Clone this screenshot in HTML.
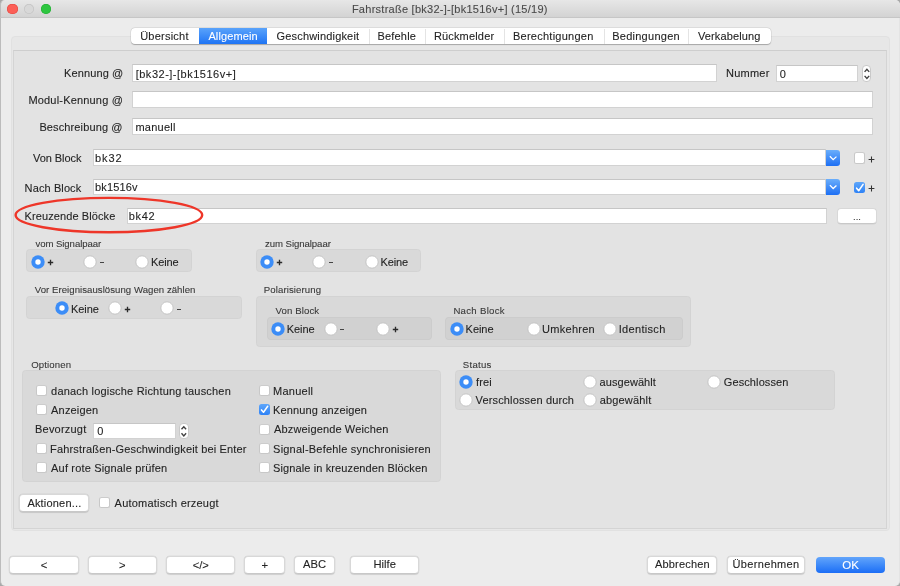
<!DOCTYPE html>
<html><head><meta charset="utf-8"><style>
html,body{margin:0;padding:0;}
body{width:900px;height:586px;position:relative;overflow:hidden;background:#a8a8a8;font-family:"Liberation Sans", sans-serif;}
.t{position:absolute;white-space:nowrap;-webkit-text-stroke:0.1px currentColor;}
</style></head><body><div style="position:absolute;left:0;top:0;width:900px;height:586px;will-change:transform;">
<div style="position:absolute;left:0px;top:0px;width:900.00px;height:586.00px;box-sizing:border-box;background:#ececec;border-left:1px solid #bcbcbc;border-right:1px solid #e4e4e4;border-radius:5px;"></div>
<div style="position:absolute;left:0px;top:0px;width:900.00px;height:18.00px;box-sizing:border-box;background:linear-gradient(#e7e7e7,#d3d3d3);border-bottom:1px solid #c6c6c6;border-left:1px solid #bcbcbc;border-radius:5px 5px 0 0;"></div>
<div style="position:absolute;left:7.2px;top:3.7px;width:10.6px;height:10.6px;border-radius:50%;background:#fc5f57;box-shadow:inset 0 0 0 0.5px #e0443e"></div>
<div style="position:absolute;left:23.9px;top:3.7px;width:10.6px;height:10.6px;border-radius:50%;background:#d8d8d8;box-shadow:inset 0 0 0 0.7px #c4c4c4"></div>
<div style="position:absolute;left:40.6px;top:3.7px;width:10.6px;height:10.6px;border-radius:50%;background:#2ec640;box-shadow:inset 0 0 0 0.5px #1eab2f"></div>
<div class="t" style="left:351.90px;top:4px;font-size:11px;line-height:11px;letter-spacing:0.261px;color:#4a4a4a;">Fahrstraße [bk32-]-[bk1516v+] (15/19)</div>
<div style="position:absolute;left:11px;top:36px;width:879.00px;height:495.00px;box-sizing:border-box;background:#e7e7e7;border:1px solid #e1e1e1;border-radius:4px;"></div>
<div style="position:absolute;left:13px;top:50px;width:874.00px;height:479.00px;box-sizing:border-box;background:#e3e3e3;border:1px solid #d4d4d4;border-top-color:#cecece;"></div>
<div style="position:absolute;left:131px;top:28px;width:640.00px;height:16.00px;box-sizing:border-box;background:#fff;border-radius:4px;box-shadow:0 0.5px 1px rgba(0,0,0,0.25),0 0 0 0.5px rgba(0,0,0,0.08);"></div>
<div style="position:absolute;left:199px;top:28px;width:68.00px;height:16.00px;box-sizing:border-box;background:linear-gradient(#5aa3fb,#1f74f4);"></div>
<div style="position:absolute;left:369px;top:29px;width:1.00px;height:15.00px;box-sizing:border-box;background:#e4e4e4;"></div>
<div style="position:absolute;left:425px;top:29px;width:1.00px;height:15.00px;box-sizing:border-box;background:#e4e4e4;"></div>
<div style="position:absolute;left:504px;top:29px;width:1.00px;height:15.00px;box-sizing:border-box;background:#e4e4e4;"></div>
<div style="position:absolute;left:604px;top:29px;width:1.00px;height:15.00px;box-sizing:border-box;background:#e4e4e4;"></div>
<div style="position:absolute;left:688px;top:29px;width:1.00px;height:15.00px;box-sizing:border-box;background:#e4e4e4;"></div>
<div class="t" style="left:140.20px;top:31px;font-size:11px;line-height:11px;letter-spacing:0.225px;color:#242424;">Übersicht</div>
<div class="t" style="left:208.40px;top:31px;font-size:11px;line-height:11px;letter-spacing:0.125px;color:#fff;">Allgemein</div>
<div class="t" style="left:276.60px;top:31px;font-size:11px;line-height:11px;letter-spacing:0.171px;color:#242424;">Geschwindigkeit</div>
<div class="t" style="left:377.40px;top:31px;font-size:11px;line-height:11px;letter-spacing:0.200px;color:#242424;">Befehle</div>
<div class="t" style="left:433.90px;top:31px;font-size:11px;line-height:11px;letter-spacing:0.167px;color:#242424;">Rückmelder</div>
<div class="t" style="left:513.00px;top:31px;font-size:11px;line-height:11px;letter-spacing:0.246px;color:#242424;">Berechtigungen</div>
<div class="t" style="left:612.20px;top:31px;font-size:11px;line-height:11px;letter-spacing:0.260px;color:#242424;">Bedingungen</div>
<div class="t" style="left:698.00px;top:31px;font-size:11px;line-height:11px;letter-spacing:0.110px;color:#242424;">Verkabelung</div>
<div class="t" style="left:64.00px;top:68px;font-size:11px;line-height:11px;letter-spacing:0.125px;color:#242424;">Kennung @</div>
<div style="position:absolute;left:132.4px;top:64.4px;width:584.60px;height:17.60px;box-sizing:border-box;background:#fff;border:1px solid #d2d2d2;border-top-color:#c6c6c6;"></div>
<div class="t" style="left:135.70px;top:69px;font-size:11px;line-height:11px;letter-spacing:0.506px;color:#242424;">[bk32-]-[bk1516v+]</div>
<div class="t" style="left:726.00px;top:68px;font-size:11px;line-height:11px;letter-spacing:0.240px;color:#242424;">Nummer</div>
<div style="position:absolute;left:776.4px;top:64.6px;width:81.90px;height:17.40px;box-sizing:border-box;background:#fff;border:1px solid #d2d2d2;border-top-color:#c6c6c6;"></div>
<div class="t" style="left:779.80px;top:69px;font-size:11px;line-height:11px;letter-spacing:-0.200px;color:#242424;">0</div>
<div style="position:absolute;left:861.7px;top:64.6px;width:9.80px;height:17.80px;box-sizing:border-box;background:#fff;border:1px solid #c9c9c9;border-radius:4px;"></div>
<svg style="position:absolute;left:861.7px;top:64.6px" width="9.80" height="17.80"><path d="M2.60 6.90 L4.90 4.30 L7.20 6.90 M2.60 10.90 L4.90 13.50 L7.20 10.90" fill="none" stroke="#404040" stroke-width="1.35"/></svg>
<div class="t" style="left:28.40px;top:95px;font-size:11px;line-height:11px;letter-spacing:0.186px;color:#242424;">Modul-Kennung @</div>
<div style="position:absolute;left:132.4px;top:91.4px;width:740.30px;height:16.90px;box-sizing:border-box;background:#fff;border:1px solid #d2d2d2;border-top-color:#c6c6c6;"></div>
<div class="t" style="left:39.40px;top:122px;font-size:11px;line-height:11px;letter-spacing:0.123px;color:#242424;">Beschreibung @</div>
<div style="position:absolute;left:132.4px;top:117.8px;width:740.30px;height:17.50px;box-sizing:border-box;background:#fff;border:1px solid #d2d2d2;border-top-color:#c6c6c6;"></div>
<div class="t" style="left:135.40px;top:122px;font-size:11px;line-height:11px;letter-spacing:0.267px;color:#242424;">manuell</div>
<div class="t" style="left:33.00px;top:153px;font-size:11px;line-height:11px;letter-spacing:-0.050px;color:#242424;">Von Block</div>
<div style="position:absolute;left:92.6px;top:149.3px;width:733.40px;height:17.00px;box-sizing:border-box;background:#fff;border:1px solid #d2d2d2;border-top-color:#c6c6c6;"></div>
<div class="t" style="left:95.10px;top:153px;font-size:11px;line-height:11px;letter-spacing:0.900px;color:#242424;">bk32</div>
<div style="position:absolute;left:826px;top:149.5px;width:14.30px;height:16.80px;box-sizing:border-box;background:linear-gradient(#6aaefb,#1d6ff4);border-radius:0 3px 3px 0;"></div>
<svg style="position:absolute;left:826px;top:149.5px" width="14.30" height="16.80"><path d="M3.85 6.30 L7.15 9.70 L10.45 6.60" fill="none" stroke="#fff" stroke-width="1.3"/></svg>
<div style="position:absolute;left:853.5px;top:152.3px;width:11.50px;height:11.50px;box-sizing:border-box;background:#fff;border:1px solid #c8c8c8;border-top-color:#cccccc;border-radius:2.5px;"></div>
<svg style="position:absolute;left:867px;top:155px" width="9" height="9"><path d="M1.60 4.5 H7.40 M4.5 1.60 V7.40" stroke="#333" stroke-width="1.05" fill="none"/></svg>
<div class="t" style="left:24.60px;top:183px;font-size:11px;line-height:11px;letter-spacing:0.111px;color:#242424;">Nach Block</div>
<div style="position:absolute;left:92.6px;top:178.5px;width:733.40px;height:16.70px;box-sizing:border-box;background:#fff;border:1px solid #d2d2d2;border-top-color:#c6c6c6;"></div>
<div class="t" style="left:95.10px;top:182px;font-size:11px;line-height:11px;letter-spacing:0.133px;color:#242424;">bk1516v</div>
<div style="position:absolute;left:826px;top:178.8px;width:14.30px;height:16.50px;box-sizing:border-box;background:linear-gradient(#6aaefb,#1d6ff4);border-radius:0 3px 3px 0;"></div>
<svg style="position:absolute;left:826px;top:178.8px" width="14.30" height="16.50"><path d="M3.85 6.15 L7.15 9.55 L10.45 6.45" fill="none" stroke="#fff" stroke-width="1.3"/></svg>
<div style="position:absolute;left:853.5px;top:181.8px;width:11.50px;height:11.50px;box-sizing:border-box;background:linear-gradient(#5ea6fa,#2e82f6);border-radius:2.5px;"></div>
<svg style="position:absolute;left:853.5px;top:181.8px" width="11.5" height="11.5" viewBox="0 0 11 11"><path d="M2.5 5.9 L4.5 8.3 L8.7 2.3" fill="none" stroke="#fff" stroke-width="1.5" stroke-linecap="round" stroke-linejoin="round"/></svg>
<svg style="position:absolute;left:867px;top:184px" width="9" height="9"><path d="M1.60 4.5 H7.40 M4.5 1.60 V7.40" stroke="#333" stroke-width="1.05" fill="none"/></svg>
<div class="t" style="left:24.60px;top:211px;font-size:11px;line-height:11px;letter-spacing:0.093px;color:#242424;">Kreuzende Blöcke</div>
<div style="position:absolute;left:126.5px;top:207.6px;width:700.80px;height:16.70px;box-sizing:border-box;background:#fff;border:1px solid #d2d2d2;border-top-color:#c6c6c6;"></div>
<div class="t" style="left:128.70px;top:211px;font-size:11px;line-height:11px;letter-spacing:0.667px;color:#242424;">bk42</div>
<div style="position:absolute;left:837px;top:207.6px;width:40.00px;height:16.00px;box-sizing:border-box;background:#fff;border:1px solid #d8d8d8;border-bottom-color:#c8c8c8;border-radius:4px;box-shadow:0 0.5px 0.5px rgba(0,0,0,0.08);"></div>
<div class="t" style="left:657.00px;width:400px;text-align:center;top:212px;font-size:9.5px;line-height:9.5px;color:#333;">...</div>
<svg style="position:absolute;left:0;top:0" width="900" height="586"><ellipse cx="108.9" cy="215.1" rx="93.3" ry="17.2" fill="none" stroke="#ee3629" stroke-width="2.4"/></svg>
<div class="t" style="left:35.40px;top:239px;font-size:9.6px;line-height:9.6px;letter-spacing:-0.062px;color:#383838;">vom Signalpaar</div>
<div style="position:absolute;left:26px;top:248.8px;width:165.60px;height:23.20px;box-sizing:border-box;background:#d9d9d9;border-radius:4px;box-shadow:inset 0 0 0 1px rgba(0,0,0,0.025);"></div>
<svg style="position:absolute;left:29.50px;top:253.80px" width="16" height="16"><circle cx="8" cy="8" r="6.70" fill="#3c8df7"/><circle cx="8" cy="8" r="2.7" fill="#fff"/></svg>
<svg style="position:absolute;left:46px;top:258px" width="9" height="9"><path d="M1.80 4.5 H7.20 M4.5 1.80 V7.20" stroke="#2a2a2a" stroke-width="1.35" fill="none"/></svg>
<svg style="position:absolute;left:81.80px;top:253.80px" width="16" height="16"><circle cx="8" cy="8" r="6.20" fill="#fff" stroke="#c4c4c4" stroke-width="1"/></svg>
<div style="position:absolute;left:100px;top:262px;width:3.8px;height:1.2px;background:#444;"></div>
<svg style="position:absolute;left:134.00px;top:253.80px" width="16" height="16"><circle cx="8" cy="8" r="6.20" fill="#fff" stroke="#c4c4c4" stroke-width="1"/></svg>
<div class="t" style="left:151.00px;top:257px;font-size:11px;line-height:11px;letter-spacing:-0.125px;color:#242424;">Keine</div>
<div class="t" style="left:265.00px;top:239px;font-size:9.6px;line-height:9.6px;letter-spacing:-0.062px;color:#383838;">zum Signalpaar</div>
<div style="position:absolute;left:255.6px;top:248.8px;width:165.60px;height:23.20px;box-sizing:border-box;background:#d9d9d9;border-radius:4px;box-shadow:inset 0 0 0 1px rgba(0,0,0,0.025);"></div>
<svg style="position:absolute;left:259.10px;top:253.80px" width="16" height="16"><circle cx="8" cy="8" r="6.70" fill="#3c8df7"/><circle cx="8" cy="8" r="2.7" fill="#fff"/></svg>
<svg style="position:absolute;left:275px;top:258px" width="9" height="9"><path d="M1.80 4.5 H7.20 M4.5 1.80 V7.20" stroke="#2a2a2a" stroke-width="1.35" fill="none"/></svg>
<svg style="position:absolute;left:311.40px;top:253.80px" width="16" height="16"><circle cx="8" cy="8" r="6.20" fill="#fff" stroke="#c4c4c4" stroke-width="1"/></svg>
<div style="position:absolute;left:329px;top:262px;width:3.8px;height:1.2px;background:#444;"></div>
<svg style="position:absolute;left:363.60px;top:253.80px" width="16" height="16"><circle cx="8" cy="8" r="6.20" fill="#fff" stroke="#c4c4c4" stroke-width="1"/></svg>
<div class="t" style="left:380.60px;top:257px;font-size:11px;line-height:11px;letter-spacing:-0.125px;color:#242424;">Keine</div>
<div class="t" style="left:34.80px;top:285px;font-size:9.6px;line-height:9.6px;letter-spacing:0.045px;color:#383838;">Vor Ereignisauslösung Wagen zählen</div>
<div style="position:absolute;left:25.6px;top:295.9px;width:216.70px;height:22.70px;box-sizing:border-box;background:#d9d9d9;border-radius:4px;box-shadow:inset 0 0 0 1px rgba(0,0,0,0.025);"></div>
<svg style="position:absolute;left:54.40px;top:300.40px" width="16" height="16"><circle cx="8" cy="8" r="6.70" fill="#3c8df7"/><circle cx="8" cy="8" r="2.7" fill="#fff"/></svg>
<div class="t" style="left:70.90px;top:304px;font-size:11px;line-height:11px;letter-spacing:-0.050px;color:#242424;">Keine</div>
<svg style="position:absolute;left:106.90px;top:300.40px" width="16" height="16"><circle cx="8" cy="8" r="6.20" fill="#fff" stroke="#c4c4c4" stroke-width="1"/></svg>
<svg style="position:absolute;left:123px;top:305px" width="9" height="9"><path d="M1.80 4.5 H7.20 M4.5 1.80 V7.20" stroke="#2a2a2a" stroke-width="1.35" fill="none"/></svg>
<svg style="position:absolute;left:159.30px;top:300.40px" width="16" height="16"><circle cx="8" cy="8" r="6.20" fill="#fff" stroke="#c4c4c4" stroke-width="1"/></svg>
<div style="position:absolute;left:177px;top:309px;width:3.8px;height:1.2px;background:#444;"></div>
<div class="t" style="left:263.80px;top:285px;font-size:9.6px;line-height:9.6px;letter-spacing:0.100px;color:#383838;">Polarisierung</div>
<div style="position:absolute;left:255.6px;top:295.9px;width:435.20px;height:50.90px;box-sizing:border-box;background:#d9d9d9;border-radius:4px;box-shadow:inset 0 0 0 1px rgba(0,0,0,0.025);"></div>
<div class="t" style="left:275.60px;top:306px;font-size:9.6px;line-height:9.6px;letter-spacing:0.112px;color:#383838;">Von Block</div>
<div style="position:absolute;left:266.9px;top:317.2px;width:165.10px;height:22.40px;box-sizing:border-box;background:#d1d1d1;border-radius:4px;box-shadow:inset 0 0 0 1px rgba(0,0,0,0.025);"></div>
<svg style="position:absolute;left:270.00px;top:321.00px" width="16" height="16"><circle cx="8" cy="8" r="6.70" fill="#3c8df7"/><circle cx="8" cy="8" r="2.7" fill="#fff"/></svg>
<div class="t" style="left:286.80px;top:324px;font-size:11px;line-height:11px;letter-spacing:-0.100px;color:#242424;">Keine</div>
<svg style="position:absolute;left:322.50px;top:321.00px" width="16" height="16"><circle cx="8" cy="8" r="6.20" fill="#fff" stroke="#c4c4c4" stroke-width="1"/></svg>
<div style="position:absolute;left:340px;top:329px;width:3.8px;height:1.2px;background:#444;"></div>
<svg style="position:absolute;left:374.90px;top:321.00px" width="16" height="16"><circle cx="8" cy="8" r="6.20" fill="#fff" stroke="#c4c4c4" stroke-width="1"/></svg>
<svg style="position:absolute;left:391px;top:325px" width="9" height="9"><path d="M1.80 4.5 H7.20 M4.5 1.80 V7.20" stroke="#2a2a2a" stroke-width="1.35" fill="none"/></svg>
<div class="t" style="left:453.40px;top:306px;font-size:9.6px;line-height:9.6px;letter-spacing:0.300px;color:#383838;">Nach Block</div>
<div style="position:absolute;left:445.2px;top:317.2px;width:238.30px;height:22.40px;box-sizing:border-box;background:#d1d1d1;border-radius:4px;box-shadow:inset 0 0 0 1px rgba(0,0,0,0.025);"></div>
<svg style="position:absolute;left:449.20px;top:321.00px" width="16" height="16"><circle cx="8" cy="8" r="6.70" fill="#3c8df7"/><circle cx="8" cy="8" r="2.7" fill="#fff"/></svg>
<div class="t" style="left:465.60px;top:324px;font-size:11px;line-height:11px;letter-spacing:-0.050px;color:#242424;">Keine</div>
<svg style="position:absolute;left:525.70px;top:321.00px" width="16" height="16"><circle cx="8" cy="8" r="6.20" fill="#fff" stroke="#c4c4c4" stroke-width="1"/></svg>
<div class="t" style="left:542.10px;top:324px;font-size:11px;line-height:11px;letter-spacing:0.271px;color:#242424;">Umkehren</div>
<svg style="position:absolute;left:602.30px;top:321.00px" width="16" height="16"><circle cx="8" cy="8" r="6.20" fill="#fff" stroke="#c4c4c4" stroke-width="1"/></svg>
<div class="t" style="left:618.70px;top:324px;font-size:11px;line-height:11px;letter-spacing:0.325px;color:#242424;">Identisch</div>
<div class="t" style="left:31.20px;top:360px;font-size:9.6px;line-height:9.6px;letter-spacing:0.129px;color:#383838;">Optionen</div>
<div style="position:absolute;left:21.9px;top:370px;width:418.90px;height:112.00px;box-sizing:border-box;background:#d9d9d9;border-radius:4px;box-shadow:inset 0 0 0 1px rgba(0,0,0,0.025);"></div>
<div style="position:absolute;left:36.1px;top:385.2px;width:11.00px;height:11.00px;box-sizing:border-box;background:#fff;border:1px solid #c8c8c8;border-top-color:#cccccc;border-radius:2.5px;"></div>
<div class="t" style="left:51.10px;top:386px;font-size:11px;line-height:11px;letter-spacing:0.188px;color:#242424;">danach logische Richtung tauschen</div>
<div style="position:absolute;left:36.1px;top:404.4px;width:11.00px;height:11.00px;box-sizing:border-box;background:#fff;border:1px solid #c8c8c8;border-top-color:#cccccc;border-radius:2.5px;"></div>
<div class="t" style="left:51.10px;top:405px;font-size:11px;line-height:11px;letter-spacing:0.171px;color:#242424;">Anzeigen</div>
<div style="position:absolute;left:36.1px;top:443.3px;width:11.00px;height:11.00px;box-sizing:border-box;background:#fff;border:1px solid #c8c8c8;border-top-color:#cccccc;border-radius:2.5px;"></div>
<div class="t" style="left:50.10px;top:444px;font-size:11px;line-height:11px;letter-spacing:0.156px;color:#242424;">Fahrstraßen-Geschwindigkeit bei Enter</div>
<div style="position:absolute;left:36.1px;top:462.2px;width:11.00px;height:11.00px;box-sizing:border-box;background:#fff;border:1px solid #c8c8c8;border-top-color:#cccccc;border-radius:2.5px;"></div>
<div class="t" style="left:51.10px;top:463px;font-size:11px;line-height:11px;letter-spacing:0.164px;color:#242424;">Auf rote Signale prüfen</div>
<div style="position:absolute;left:259.2px;top:385.2px;width:11.00px;height:11.00px;box-sizing:border-box;background:#fff;border:1px solid #c8c8c8;border-top-color:#cccccc;border-radius:2.5px;"></div>
<div class="t" style="left:273.10px;top:386px;font-size:11px;line-height:11px;letter-spacing:0.233px;color:#242424;">Manuell</div>
<div style="position:absolute;left:259.2px;top:404.4px;width:11.00px;height:11.00px;box-sizing:border-box;background:linear-gradient(#5ea6fa,#2e82f6);border-radius:2.5px;"></div>
<svg style="position:absolute;left:259.2px;top:404.4px" width="11" height="11" viewBox="0 0 11 11"><path d="M2.5 5.9 L4.5 8.3 L8.7 2.3" fill="none" stroke="#fff" stroke-width="1.5" stroke-linecap="round" stroke-linejoin="round"/></svg>
<div class="t" style="left:273.10px;top:405px;font-size:11px;line-height:11px;letter-spacing:0.133px;color:#242424;">Kennung anzeigen</div>
<div style="position:absolute;left:259.2px;top:423.6px;width:11.00px;height:11.00px;box-sizing:border-box;background:#fff;border:1px solid #c8c8c8;border-top-color:#cccccc;border-radius:2.5px;"></div>
<div class="t" style="left:274.10px;top:424px;font-size:11px;line-height:11px;letter-spacing:0.139px;color:#242424;">Abzweigende Weichen</div>
<div style="position:absolute;left:259.2px;top:443.3px;width:11.00px;height:11.00px;box-sizing:border-box;background:#fff;border:1px solid #c8c8c8;border-top-color:#cccccc;border-radius:2.5px;"></div>
<div class="t" style="left:273.10px;top:444px;font-size:11px;line-height:11px;letter-spacing:0.207px;color:#242424;">Signal-Befehle synchronisieren</div>
<div style="position:absolute;left:259.2px;top:462.2px;width:11.00px;height:11.00px;box-sizing:border-box;background:#fff;border:1px solid #c8c8c8;border-top-color:#cccccc;border-radius:2.5px;"></div>
<div class="t" style="left:273.10px;top:463px;font-size:11px;line-height:11px;letter-spacing:0.111px;color:#242424;">Signale in kreuzenden Blöcken</div>
<div class="t" style="left:35.00px;top:424px;font-size:11px;line-height:11px;letter-spacing:0.213px;color:#242424;">Bevorzugt</div>
<div style="position:absolute;left:93.3px;top:422.6px;width:82.70px;height:16.60px;box-sizing:border-box;background:#fff;border:1px solid #d2d2d2;border-top-color:#c6c6c6;"></div>
<div class="t" style="left:97.30px;top:426px;font-size:11px;line-height:11px;color:#242424;">0</div>
<div style="position:absolute;left:179.2px;top:422.6px;width:9.60px;height:16.60px;box-sizing:border-box;background:#fff;border:1px solid #c9c9c9;border-radius:4px;"></div>
<svg style="position:absolute;left:179.2px;top:422.6px" width="9.60" height="16.60"><path d="M2.50 6.30 L4.80 3.70 L7.10 6.30 M2.50 10.30 L4.80 12.90 L7.10 10.30" fill="none" stroke="#404040" stroke-width="1.35"/></svg>
<div class="t" style="left:462.80px;top:360px;font-size:9.6px;line-height:9.6px;letter-spacing:0.260px;color:#383838;">Status</div>
<div style="position:absolute;left:455px;top:370.3px;width:379.90px;height:40.00px;box-sizing:border-box;background:#d9d9d9;border-radius:4px;box-shadow:inset 0 0 0 1px rgba(0,0,0,0.025);"></div>
<svg style="position:absolute;left:458.20px;top:374.40px" width="16" height="16"><circle cx="8" cy="8" r="6.70" fill="#3c8df7"/><circle cx="8" cy="8" r="2.7" fill="#fff"/></svg>
<div class="t" style="left:475.90px;top:377px;font-size:11px;line-height:11px;letter-spacing:0.200px;color:#242424;">frei</div>
<svg style="position:absolute;left:582.20px;top:374.40px" width="16" height="16"><circle cx="8" cy="8" r="6.20" fill="#fff" stroke="#c4c4c4" stroke-width="1"/></svg>
<div class="t" style="left:599.60px;top:377px;font-size:11px;line-height:11px;letter-spacing:0.067px;color:#242424;">ausgewählt</div>
<svg style="position:absolute;left:706.10px;top:374.40px" width="16" height="16"><circle cx="8" cy="8" r="6.20" fill="#fff" stroke="#c4c4c4" stroke-width="1"/></svg>
<div class="t" style="left:723.80px;top:377px;font-size:11px;line-height:11px;letter-spacing:0.100px;color:#242424;">Geschlossen</div>
<svg style="position:absolute;left:458.20px;top:391.90px" width="16" height="16"><circle cx="8" cy="8" r="6.20" fill="#fff" stroke="#c4c4c4" stroke-width="1"/></svg>
<div class="t" style="left:475.60px;top:395px;font-size:11px;line-height:11px;letter-spacing:0.141px;color:#242424;">Verschlossen durch</div>
<svg style="position:absolute;left:582.20px;top:391.90px" width="16" height="16"><circle cx="8" cy="8" r="6.20" fill="#fff" stroke="#c4c4c4" stroke-width="1"/></svg>
<div class="t" style="left:599.70px;top:395px;font-size:11px;line-height:11px;letter-spacing:0.175px;color:#242424;">abgewählt</div>
<div style="position:absolute;left:19.3px;top:494.3px;width:69.40px;height:17.30px;box-sizing:border-box;background:#fff;border:1px solid #d8d8d8;border-bottom-color:#c8c8c8;border-radius:4px;box-shadow:0 0 0 0.5px rgba(0,0,0,0.06),0 0.5px 1px rgba(0,0,0,0.1);"></div>
<div class="t" style="left:27.40px;top:498px;font-size:11px;line-height:11px;letter-spacing:0.190px;color:#242424;">Aktionen...</div>
<div style="position:absolute;left:99.4px;top:497.2px;width:11.00px;height:11.00px;box-sizing:border-box;background:#fff;border:1px solid #c8c8c8;border-top-color:#cccccc;border-radius:2.5px;"></div>
<div class="t" style="left:114.60px;top:498px;font-size:11px;line-height:11px;letter-spacing:0.206px;color:#242424;">Automatisch erzeugt</div>
<div style="position:absolute;left:9.4px;top:556.3px;width:69.20px;height:17.30px;box-sizing:border-box;background:#fff;border:1px solid #d8d8d8;border-bottom-color:#c8c8c8;border-radius:4px;box-shadow:0 0 0 0.5px rgba(0,0,0,0.06),0 0.5px 1px rgba(0,0,0,0.1);"></div>
<div class="t" style="left:-156.00px;width:400px;text-align:center;top:560px;font-size:11.2px;line-height:11.2px;color:#242424;">&lt;</div>
<div style="position:absolute;left:87.6px;top:556.3px;width:69.30px;height:17.30px;box-sizing:border-box;background:#fff;border:1px solid #d8d8d8;border-bottom-color:#c8c8c8;border-radius:4px;box-shadow:0 0 0 0.5px rgba(0,0,0,0.06),0 0.5px 1px rgba(0,0,0,0.1);"></div>
<div class="t" style="left:-77.75px;width:400px;text-align:center;top:560px;font-size:11.2px;line-height:11.2px;color:#242424;">&gt;</div>
<div style="position:absolute;left:166.2px;top:556.3px;width:69.20px;height:17.30px;box-sizing:border-box;background:#fff;border:1px solid #d8d8d8;border-bottom-color:#c8c8c8;border-radius:4px;box-shadow:0 0 0 0.5px rgba(0,0,0,0.06),0 0.5px 1px rgba(0,0,0,0.1);"></div>
<div class="t" style="left:0.80px;width:400px;text-align:center;top:560px;font-size:11.2px;line-height:11.2px;color:#242424;">&lt;/&gt;</div>
<div style="position:absolute;left:244.2px;top:556.3px;width:41.00px;height:17.30px;box-sizing:border-box;background:#fff;border:1px solid #d8d8d8;border-bottom-color:#c8c8c8;border-radius:4px;box-shadow:0 0 0 0.5px rgba(0,0,0,0.06),0 0.5px 1px rgba(0,0,0,0.1);"></div>
<div class="t" style="left:64.70px;width:400px;text-align:center;top:560px;font-size:11.2px;line-height:11.2px;color:#242424;">+</div>
<div style="position:absolute;left:294.0px;top:556.3px;width:41.00px;height:17.30px;box-sizing:border-box;background:#fff;border:1px solid #d8d8d8;border-bottom-color:#c8c8c8;border-radius:4px;box-shadow:0 0 0 0.5px rgba(0,0,0,0.06),0 0.5px 1px rgba(0,0,0,0.1);"></div>
<div class="t" style="left:114.50px;width:400px;text-align:center;top:559px;font-size:11.2px;line-height:11.2px;color:#242424;">ABC</div>
<div style="position:absolute;left:350.1px;top:556.3px;width:69.20px;height:17.30px;box-sizing:border-box;background:#fff;border:1px solid #d8d8d8;border-bottom-color:#c8c8c8;border-radius:4px;box-shadow:0 0 0 0.5px rgba(0,0,0,0.06),0 0.5px 1px rgba(0,0,0,0.1);"></div>
<div class="t" style="left:184.70px;width:400px;text-align:center;top:559px;font-size:11.2px;line-height:11.2px;color:#242424;">Hilfe</div>
<div style="position:absolute;left:647.2px;top:556.3px;width:69.60px;height:17.30px;box-sizing:border-box;background:#fff;border:1px solid #d8d8d8;border-bottom-color:#c8c8c8;border-radius:4px;box-shadow:0 0 0 0.5px rgba(0,0,0,0.06),0 0.5px 1px rgba(0,0,0,0.1);"></div>
<div class="t" style="left:655.00px;top:559px;font-size:11px;line-height:11px;letter-spacing:0.175px;color:#242424;">Abbrechen</div>
<div style="position:absolute;left:727.1px;top:556.3px;width:78.30px;height:17.30px;box-sizing:border-box;background:#fff;border:1px solid #d8d8d8;border-bottom-color:#c8c8c8;border-radius:4px;box-shadow:0 0 0 0.5px rgba(0,0,0,0.06),0 0.5px 1px rgba(0,0,0,0.1);"></div>
<div class="t" style="left:732.50px;top:559px;font-size:11px;line-height:11px;letter-spacing:0.344px;color:#242424;">Übernehmen</div>
<div style="position:absolute;left:815.8px;top:556.5px;width:69.40px;height:16.90px;box-sizing:border-box;background:linear-gradient(#62a5fb,#1b6ef6);border-radius:4px;"></div>
<div class="t" style="left:650.50px;width:400px;text-align:center;top:560px;font-size:11.5px;line-height:11.5px;color:#fff;">OK</div>
</div></body></html>
